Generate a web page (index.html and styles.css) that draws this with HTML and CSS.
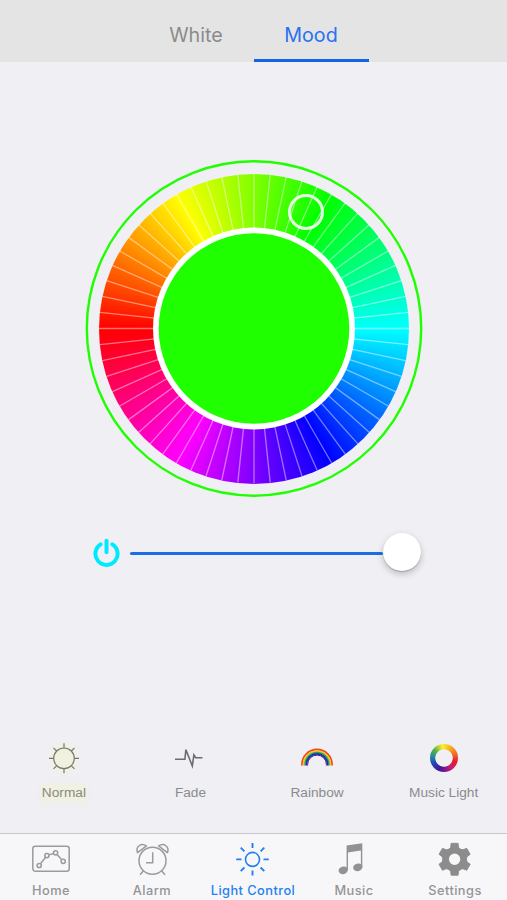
FILE: index.html
```
<!DOCTYPE html>
<html lang="en">
<head>
    <meta charset="UTF-8">
    <meta name="viewport" content="width=device-width, initial-scale=1.0">
    <title>Light Control</title>
    <link rel="stylesheet" href="styles.css">
</head>
<body>
    <!-- Top Tabs -->
    <header class="tabs">
        <a class="tab tab-white">White</a>
        <a class="tab tab-mood active">Mood</a>
    </header>

    <!-- Colour Wheel and Brightness -->
    <main>
        <div class="wheel">
            <svg class="wheel-overlay" viewBox="-169 -169.5 338 338">
                <defs>
                    <path id="spoke" d="M-155 0H155"/>
                    <g id="spokes">
                        <use href="#spoke"/>
                        <use href="#spoke" transform="rotate(6)"/>
                        <use href="#spoke" transform="rotate(12)"/>
                        <use href="#spoke" transform="rotate(18)"/>
                        <use href="#spoke" transform="rotate(24)"/>
                    </g>
                </defs>
                <g stroke="#fff" stroke-opacity=".45" stroke-width="1.3">
                    <use href="#spokes"/>
                    <use href="#spokes" transform="rotate(30)"/>
                    <use href="#spokes" transform="rotate(60)"/>
                    <use href="#spokes" transform="rotate(90)"/>
                    <use href="#spokes" transform="rotate(120)"/>
                    <use href="#spokes" transform="rotate(150)"/>
                </g>
                <circle r="167.2" fill="none" stroke="#1fff00" stroke-width="2.4"/>
                <circle r="101" fill="#fff"/>
                <circle r="95.3" fill="#1fff00"/>
                <circle cx="52" cy="-116.5" r="16.5" fill="none" stroke="#fff" stroke-opacity=".88" stroke-width="3"/>
            </svg>
            <div class="wheel-colors"></div>
        </div>

        <div class="brightness">
            <svg class="power" width="28" height="30" viewBox="0 0 28 30" fill="none" stroke="#00eaff" stroke-width="4" stroke-linecap="round">
                <path d="M8.6 7.4A11.1 11.1 0 1 0 20.4 7.4"/>
                <path d="M14.5 3.8V15.2"/>
            </svg>
            <div class="track"></div>
            <div class="thumb"></div>
        </div>
    </main>

    <!-- Light Modes -->
    <section class="modes">
        <div class="mode mode-active">
            <svg class="icon-glow" width="38" height="34" viewBox="-19 -17.3 38 34" fill="none" stroke="#77776c" stroke-width="1.2">
                <circle r="10.3" fill="#f1f1e0"/>
                <path d="M0-10.3V-15M0 10.3V15M-10.3 0H-15M10.3 0H15M-7.3-7.3L-10.5-10.5M7.3-7.3L10.5-10.5M-7.3 7.3L-10.5 10.5M7.3 7.3L10.5 10.5"/>
            </svg>
            <span>Normal</span>
        </div>
        <div class="mode">
            <svg width="38" height="34" viewBox="-18.5 -17 38 34" fill="none" stroke="#6c6c70" stroke-width="1.6">
                <path d="M-14.5 1.3H-4.6L-3.6-8.3L2.8 8L4.4-3L6.2-.3H13"/>
            </svg>
            <span>Fade</span>
        </div>
        <div class="mode">
            <svg width="38" height="34" viewBox="-19 -17 38 34" fill="none" stroke-width="1.8">
                <path d="M-15 7.5V6.5A15 15 0 0 1 15 6.5V7.5" stroke="#ef4823"/>
                <path d="M-13.4 7.5V6.5A13.4 13.4 0 0 1 13.4 6.5V7.5" stroke="#f5c51d"/>
                <path d="M-12 7.5V6.5A12 12 0 0 1 12 6.5V7.5" stroke="#24a667" stroke-width="1.4"/>
                <path d="M-10.6 7.5V6.5A10.6 10.6 0 0 1 10.6 6.5V7.5" stroke="#173597"/>
                <path d="M-9.4 7.5V6.5A9.4 9.4 0 0 1 9.4 6.5V7.5" stroke="#4c1b91" stroke-width="1"/>
            </svg>
            <span>Rainbow</span>
        </div>
        <div class="mode">
            <div class="icon-box"><div class="color-ring"></div></div>
            <span>Music Light</span>
        </div>
    </section>

    <!-- Bottom Navigation -->
    <nav>
        <a class="nav-home">
            <svg width="40" height="34" viewBox="0 0 40 34" fill="none" stroke="#9b9b9e" stroke-width="1.5">
                <rect x="1.8" y="4.3" width="36.4" height="25" rx="2.5"/>
                <circle cx="8.2" cy="23.5" r="2.1"/>
                <circle cx="15.9" cy="13.6" r="2.1"/>
                <circle cx="24.6" cy="10.8" r="2.1"/>
                <circle cx="32.2" cy="19.3" r="2.1"/>
                <path d="M9.5 21.8L14.6 15.3M17.9 12.9L22.6 11.5M26 12.4L30.8 17.7"/>
            </svg>
            <span>Home</span>
        </a>
        <a class="nav-alarm">
            <svg width="40" height="34" viewBox="0 0 40 34" fill="none" stroke="#9b9b9e" stroke-width="1.5">
                <circle cx="20.5" cy="18.7" r="13.5"/>
                <path d="M20.7 10.2V20.7H14M11.5 28.7L8 32.7M29.5 28.7L33 32.7"/>
                <path d="M5.6 10.6C3.2 4.8 9.2.4 14.4 3.9Z" stroke-linejoin="round"/>
                <path d="M35.4 10.6C37.8 4.8 31.8.4 26.6 3.9Z" stroke-linejoin="round"/>
            </svg>
            <span>Alarm</span>
        </a>
        <a class="nav-light active">
            <svg width="40" height="34" viewBox="-19.5 -17 40 34" fill="none" stroke="#2480f2" stroke-width="1.9">
                <circle cy=".4" r="7" stroke-width="1.6"/>
                <path d="M0-11V-16M0 11.5V16.5M-11 .4H-16.3M11 .4H16.3M-8.1-7.7L-11.8-11.4M8.1-7.7L11.8-11.4M-8.1 8.5L-11.8 12.2M8.1 8.5L11.8 12.2"/>
            </svg>
            <span>Light Control</span>
        </a>
        <a class="nav-music">
            <svg width="40" height="34" viewBox="0 0 40 34" fill="#929292">
                <path d="M12.6 3.6L28.3 1.2V25.5H26.9V8.6L14 10.6V28H12.6Z"/>
                <ellipse cx="9.2" cy="28.3" rx="4.7" ry="3.8" transform="rotate(-15 9.2 28.3)"/>
                <ellipse cx="23.8" cy="25.3" rx="4.7" ry="3.8" transform="rotate(-15 23.8 25.3)"/>
            </svg>
            <span>Music</span>
        </a>
        <a class="nav-settings">
            <svg width="40" height="34" viewBox="-19.6 -17.3 40 34">
                <defs>
                    <path id="tooth" d="M-6.2-9.5L-4-12L-3.5-16H3.5L4-12L6.2-9.5Z" stroke="#8c8c8c" stroke-width=".8" stroke-linejoin="round"/>
                </defs>
                <g fill="#8c8c8c">
                    <use href="#tooth"/>
                    <use href="#tooth" transform="rotate(60)"/>
                    <use href="#tooth" transform="rotate(120)"/>
                    <use href="#tooth" transform="rotate(180)"/>
                    <use href="#tooth" transform="rotate(240)"/>
                    <use href="#tooth" transform="rotate(300)"/>
                </g>
                <circle r="8.9" fill="none" stroke="#8c8c8c" stroke-width="6.4"/>
            </svg>
            <span>Settings</span>
        </a>
    </nav>
</body>
</html>
```
FILE: styles.css
```
/* Basic reset */
* {
    margin: 0;
    padding: 0;
    box-sizing: border-box;
}

body {
    height: 900px;
    display: flex;
    flex-direction: column;
    background-color: #efeff4;
    font-family: Inter, Roboto, sans-serif;
    overflow: hidden;
}

svg {
    display: block;
}

/* Top tabs */
.tabs {
    height: 62px;
    display: flex;
    justify-content: center;
    background-color: #e4e4e4;
}

.tab {
    width: 115px;
    padding-top: 22px;
    border-bottom: 3px solid transparent;
    color: #8b8b8b;
    font-size: 19.7px;
    line-height: 26px;
    text-align: center;
}

.tab.active {
    color: #2a72f0;
    border-bottom-color: #1263e6;
}

/* Colour wheel */
main {
    flex: 1;
    padding-top: 97px;
}

.wheel {
    position: relative;
    width: 338px;
    height: 338px;
    margin-left: 85px;
    padding: 14.5px 14px 0;
}

.wheel-colors {
    width: 310px;
    height: 310px;
    border-radius: 50%;
    background: conic-gradient(from 270deg, #f00, #ff0, #0f0, #0ff, #00f, #f0f, #f00);
}

/* Spokes, hub and marker lie over the gradient */
.wheel-overlay {
    position: absolute;
    z-index: 1;
    top: 0;
    left: 0;
    width: 338px;
    height: 338px;
}

/* Brightness slider */
.brightness {
    display: flex;
    align-items: center;
    width: 329px;
    height: 38px;
    margin: 36px 0 0 92px;
}

.power {
    margin-right: 10px;
}

.track {
    flex: 1;
    height: 3px;
    margin-top: 3px;
    border-radius: 2px;
    background-color: #1a6fe8;
}

.thumb {
    width: 38px;
    height: 38px;
    border-radius: 50%;
    background-color: #fff;
    box-shadow: 0 3px 7px rgba(0, 0, 0, 0.22), 0 1px 1px rgba(0, 0, 0, 0.2);
}

/* Light modes */
.modes {
    display: grid;
    grid-template-columns: repeat(4, 126.6px);
    height: 92px;
    padding-left: 0.6px;
    font-family: "Liberation Sans", Arial, sans-serif;
}

.mode {
    display: flex;
    flex-direction: column;
    align-items: center;
    color: #8b8b8e;
    font-size: 13.7px;
    line-height: 16px;
}

.mode span {
    margin-top: 10px;
}

.icon-glow {
    background: radial-gradient(circle, #f1f1e3 8px, #efeff4 19px);
}

.mode-active span {
    color: #89897d;
    background-color: #f1f1e2;
    box-shadow: 0 0 5px 1px #f1f1e2;
}

.icon-box {
    width: 34px;
    height: 34px;
    padding: 3px;
}

.color-ring {
    width: 28px;
    height: 28px;
    border-radius: 50%;
    background: radial-gradient(circle, #efeff4 8.3px, transparent 9.1px), conic-gradient(#f7e72c, #f6a01f 40deg, #ee6424 75deg, #ea1d2d 105deg, #c71e69 145deg, #7b168f 175deg, #3c1a9d 205deg, #1d4bb5 245deg, #2587a4 275deg, #55b148 310deg, #f7ef2b 350deg);
}

/* Bottom navigation */
nav {
    display: grid;
    grid-template-columns: repeat(5, 101px);
    height: 67px;
    padding: 8px 0 0 0.5px;
    border-top: 1px solid #c9c9cd;
    background-color: #f7f7f9;
}

nav a {
    display: flex;
    flex-direction: column;
    align-items: center;
    color: #949497;
    font-size: 12.8px;
    font-weight: 500;
    line-height: 16px;
    letter-spacing: 0.45px;
    white-space: nowrap;
}

nav span {
    margin-top: 7px;
}

nav .active {
    color: #2480f2;
}
```
